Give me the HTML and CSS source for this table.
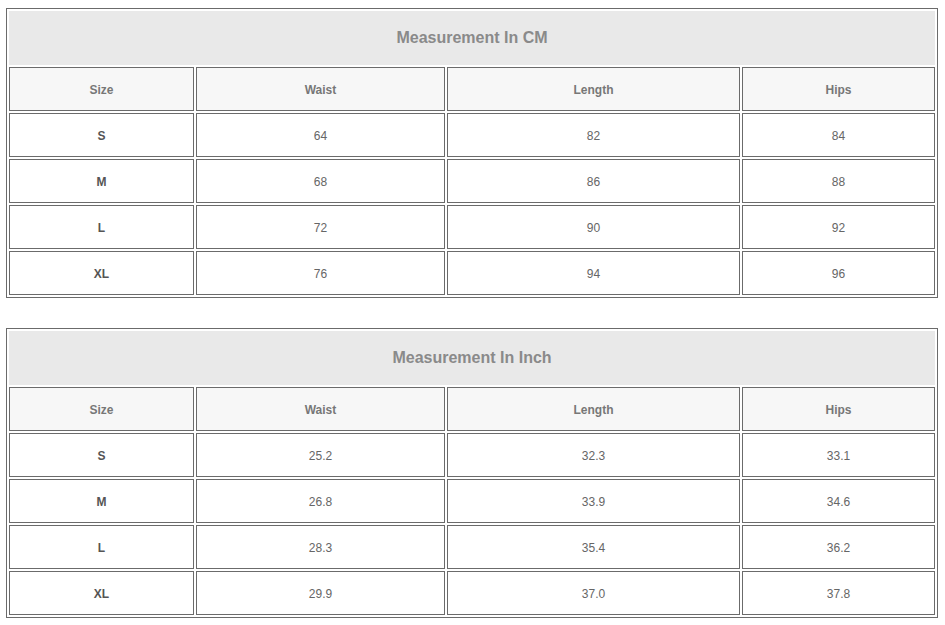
FILE: index.html
```html
<!DOCTYPE html>
<html>
<head>
<meta charset="utf-8">
<link rel="stylesheet" href="styles.css">
</head>
<body>
<table class="size-table">
  <colgroup><col class="c1"><col class="c2"><col class="c3"><col class="c4"></colgroup>
  <tr><td class="title" colspan="4">Measurement In CM</td></tr>
  <tr class="head"><td>Size</td><td>Waist</td><td>Length</td><td>Hips</td></tr>
  <tr><td class="sz">S</td><td>64</td><td>82</td><td>84</td></tr>
  <tr><td class="sz">M</td><td>68</td><td>86</td><td>88</td></tr>
  <tr><td class="sz">L</td><td>72</td><td>90</td><td>92</td></tr>
  <tr><td class="sz">XL</td><td>76</td><td>94</td><td>96</td></tr>
</table>
<table class="size-table">
  <colgroup><col class="c1"><col class="c2"><col class="c3"><col class="c4"></colgroup>
  <tr><td class="title" colspan="4">Measurement In Inch</td></tr>
  <tr class="head"><td>Size</td><td>Waist</td><td>Length</td><td>Hips</td></tr>
  <tr><td class="sz">S</td><td>25.2</td><td>32.3</td><td>33.1</td></tr>
  <tr><td class="sz">M</td><td>26.8</td><td>33.9</td><td>34.6</td></tr>
  <tr><td class="sz">L</td><td>28.3</td><td>35.4</td><td>36.2</td></tr>
  <tr><td class="sz">XL</td><td>29.9</td><td>37.0</td><td>37.8</td></tr>
</table>
</body>
</html>
```
FILE: styles.css
```css
html, body {
  background: #ffffff;
}
body {
  margin: 8px 0 0 6px;
  font-family: "Liberation Sans", Arial, sans-serif;
}
.size-table {
  border-collapse: separate;
  border-spacing: 2px;
  border: 1px solid #6b6b6b;
  table-layout: fixed;
  width: 932px;
  margin-bottom: 30px;
}
.size-table td {
  box-sizing: border-box;
  border: 1px solid #6b6b6b;
  height: 44px;
  padding: 2px 0 0 0;
  text-align: center;
  vertical-align: middle;
  font-size: 12px;
  color: #666;
  background: #fff;
}
.c1 { width: 185px; }
.c2 { width: 249px; }
.c3 { width: 293px; }
.c4 { width: 193px; }
.size-table td.title {
  height: 54px;
  padding: 0;
  background: #e9e9e9;
  border-color: #e9e9e9;
  font-size: 16px;
  font-weight: bold;
  color: #8a8a8a;
}
.size-table .head td {
  background: #f7f7f7;
  font-weight: bold;
  color: #777;
}
.size-table td.sz {
  font-weight: bold;
  color: #555;
}
```
